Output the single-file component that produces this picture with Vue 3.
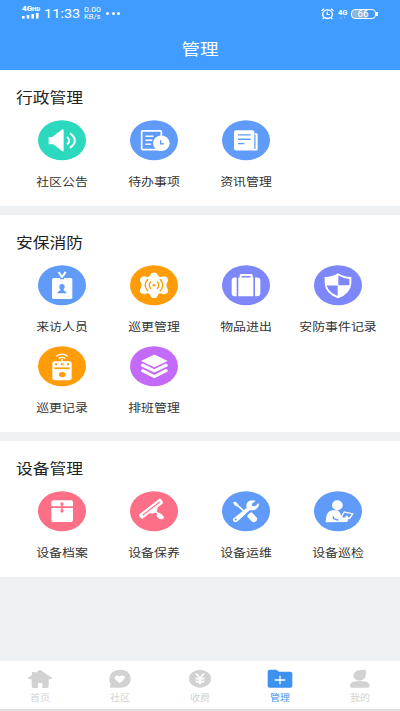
<script setup>
const sections = [
  {
    title: '行政管理',
    items: [
      { label: '社区公告', icon: 'speaker', color: '#2cd8be' },
      { label: '待办事项', icon: 'todo', color: '#619bf9' },
      { label: '资讯管理', icon: 'news', color: '#619bf9' },
    ],
  },
  {
    title: '安保消防',
    items: [
      { label: '来访人员', icon: 'visitor', color: '#619bf9' },
      { label: '巡更管理', icon: 'patrol', color: '#ff9c08' },
      { label: '物品进出', icon: 'luggage', color: '#7d87fa' },
      { label: '安防事件记录', icon: 'shield', color: '#7d87fa' },
      { label: '巡更记录', icon: 'recorder', color: '#ff9c08' },
      { label: '排班管理', icon: 'layers', color: '#c46af8' },
    ],
  },
  {
    title: '设备管理',
    items: [
      { label: '设备档案', icon: 'archive', color: '#fd6f87' },
      { label: '设备保养', icon: 'scraper', color: '#fd6f87' },
      { label: '设备运维', icon: 'tools', color: '#619bf9' },
      { label: '设备巡检', icon: 'inspect', color: '#619bf9' },
    ],
  },
]
const tabs = [
  { label: '首页', icon: 'home' },
  { label: '社区', icon: 'community' },
  { label: '收费', icon: 'fee' },
  { label: '管理', icon: 'manage', active: true },
  { label: '我的', icon: 'mine' },
]
</script>

<template>
  <div class="app">
    <header class="header">
      <div class="status">
        <div class="signal">
          <div class="net">4G<small>HD</small></div>
          <svg width="18" height="6" viewBox="0 0 18 6" fill="#fff">
            <rect x="0" y="3" width="2.6" height="2.6" /><rect x="4.7" y="2" width="2.6" height="3.6" />
            <rect x="9.4" y="1" width="2.6" height="4.6" /><rect x="14" y="0" width="2.6" height="5.6" />
          </svg>
        </div>
        <span class="clock">11:33</span>
        <div class="speed"><span>0.00</span><span>KB/s</span></div>
        <span class="dots"><i></i><i></i><i></i></span>
        <span class="spacer"></span>
        <svg class="alarm" width="13" height="12" viewBox="0 0 13 12" fill="none" stroke="#fff">
          <ellipse cx="6.5" cy="6.2" rx="4.9" ry="4.3" stroke-width="1.4" />
          <path d="M6.2 3.6V6.5H8.8" stroke-width="1.1" />
          <path d="M.6 2.7L3 .8M12.4 2.7L10 .8M2.8 9.8L1.7 11M10.2 9.8L11.3 11" stroke-width="1.3" />
        </svg>
        <div class="mobile">
          <b>4G</b>
          <svg width="9" height="3" viewBox="0 0 9 3" fill="#fff" opacity=".4"><path d="M2 2.5L3 .5L4 2.5ZM5.5 .5H7.5L6.5 2.5Z" /></svg>
        </div>
        <div class="battery"><span>66</span></div>
      </div>
      <h1><span class="flat">管理</span></h1>
    </header>

    <main>
      <section v-for="s in sections" :key="s.title" class="card">
        <h2><span class="flat">{{ s.title }}</span></h2>
        <div class="grid">
          <div v-for="it in s.items" :key="it.label" class="item">
            <svg class="icon" viewBox="0 0 144 120" :style="{ color: it.color }">
              <ellipse cx="72" cy="60" rx="72" ry="60" fill="currentColor" />
              <g v-if="it.icon === 'speaker'" fill="#fff">
                <path d="M32 50H43L72 28Q77 25 77 31V90Q77 96 72 92L46 72H32Z" />
                <path d="M87 50Q101 61 87 73M96 39Q125 61 96 83" fill="none" stroke="#fff" stroke-width="6" />
              </g>
              <g v-else-if="it.icon === 'todo'" fill="none" stroke="#fff" stroke-width="5">
                <rect x="35" y="32" width="59" height="56" rx="3" />
                <path d="M46 48H70M46 60H67M46 72H63" stroke-width="4" />
                <ellipse cx="94" cy="69" rx="25" ry="23" fill="#fff" stroke="none" />
                <path d="M92 60V71H102" stroke="currentColor" stroke-width="4" />
              </g>
              <g v-else-if="it.icon === 'news'" fill="#fff">
                <rect x="36" y="30" width="61" height="61" rx="6" />
                <path d="M94 39H103Q107 39 107 43V87Q107 91 103 91H92V86H98V39Z" />
                <path d="M99 44V86" stroke="currentColor" stroke-width="3" />
                <path d="M48 44H86M48 57H86M48 70H67" stroke="currentColor" stroke-width="4" />
              </g>
              <g v-else-if="it.icon === 'visitor'" fill="#fff">
                <rect x="42" y="38" width="61" height="63" rx="5" />
                <path d="M62 20L72 36L83 20" fill="none" stroke="#fff" stroke-width="6" />
                <path d="M66 38H78V42H66Z" fill="currentColor" />
                <path d="M72 56C78 56 81 60 80 66C79 70 77 72 76 74C78 77 85 77 86 84H58C59 77 66 77 68 74C66 72 64 70 64 66C63 60 66 56 72 56Z" fill="currentColor" />
              </g>
              <g v-else-if="it.icon === 'patrol'" fill="none" stroke="currentColor" stroke-width="4">
                <path d="M63 25Q72 18 81 25Q84 35 92 36Q101 31 109 35Q117 41 113 49Q106 60 113 71Q117 79 109 85Q101 89 92 84Q84 85 81 95Q72 102 63 95Q60 85 52 84Q43 89 35 85Q27 79 31 71Q38 60 31 49Q27 41 35 35Q43 31 52 36Q60 35 63 25Z" fill="#fff" stroke="none" />
                <circle cx="72" cy="60" r="4" fill="currentColor" stroke="none" />
                <path d="M63 49Q52 60 63 71M81 49Q92 60 81 71M54 42Q37 60 54 78M90 42Q107 60 90 78" />
              </g>
              <g v-else-if="it.icon === 'luggage'" fill="#fff">
                <path d="M44 37V93H38Q29 93 29 84V47Q29 37 38 37ZM99 37V93H105Q115 93 115 84V47Q115 37 105 37Z" />
                <path d="M49 37H53V30Q53 26 58 26H87Q92 26 92 30V37H94V93H49ZM59 32V37H86V32Z" fill-rule="evenodd" />
              </g>
              <g v-else-if="it.icon === 'shield'">
                <path d="M72 24Q88 35 112 35V55Q110 86 72 99Q34 86 32 55V35Q56 35 72 24Z" fill="#fff" />
                <path d="M73 31Q88 40 106 41V60H73ZM71 61V92Q44 82 38 61Z" fill="currentColor" />
              </g>
              <g v-else-if="it.icon === 'recorder'" fill="#fff">
                <rect x="43" y="45" width="58" height="57" rx="7" />
                <path d="M55 30Q72 17 89 30M62 37Q72 29 82 37" fill="none" stroke="#fff" stroke-width="4" />
                <circle cx="72" cy="41" r="3" />
                <path d="M51 54H57M69 54H76M87 54H93" stroke="currentColor" stroke-width="6" />
                <path d="M49 66H95" stroke="currentColor" stroke-width="5" />
                <ellipse cx="73" cy="85" rx="10" ry="8" fill="currentColor" />
              </g>
              <g v-else-if="it.icon === 'layers'" fill="#fff">
                <path d="M73 25L113 44L73 63L33 44Z" />
                <path d="M33 55L39 52L73 69L107 52L113 55V60L73 79L33 60Z" />
                <path d="M33 71L39 68L73 86L107 68L113 71V76L73 96L33 76Z" />
              </g>
              <g v-else-if="it.icon === 'archive'" fill="#fff">
                <path d="M40 45V32Q40 27 46 27H99Q105 27 105 32V45ZM40 50H105V86Q105 92 99 92H46Q40 92 40 86Z" />
                <path d="M72 38V59" stroke="currentColor" stroke-width="4" />
                <circle cx="72" cy="38" r="5" fill="currentColor" /><circle cx="72" cy="59" r="5" fill="currentColor" />
              </g>
              <g v-else-if="it.icon === 'scraper'" fill="#fff">
                <path d="M28 69L87 23Q91 21 95 26L98 31Q100 35 97 38L83 48L81 60L71 67L58 66L39 82Q36 85 33 81L28 75Q26 72 28 69Z" />
                <path d="M38 72L89 32" stroke="currentColor" stroke-width="3.5" />
                <path d="M76 61L88 69" stroke="#fff" stroke-width="5" />
                <path d="M80 68Q86 63 94 68L102 77Q103 83 96 84L88 83L80 75Z" />
              </g>
              <g v-else-if="it.icon === 'tools'" fill="#fff">
                <path d="M38 38L51 46L66 60" fill="none" stroke="#fff" stroke-width="5" />
                <path d="M33 34L40 31L50 41L46 46L38 42Z" />
                <path d="M79 69L88 62L105 80Q108 86 101 91Q94 95 89 90L75 76Z" />
                <path d="M34 82L74 50Q70 35 82 29Q91 25 101 29L89 38L91 44L99 45L110 35Q113 48 102 54Q93 59 84 56L46 91Q39 95 35 90Q31 86 34 82Z" />
                <circle cx="41" cy="85" r="3" fill="currentColor" />
              </g>
              <g v-else fill="#fff">
                <ellipse cx="70" cy="42" rx="16" ry="15" />
                <path d="M35 93Q36 59 54 57H69Q76 58 80 70L87 79H101Q106 85 99 92Z" />
                <path d="M58 75V82L73 87" fill="none" stroke="currentColor" stroke-width="4" />
                <path d="M82 76L91 62L116 68L107 81H100" fill="none" stroke="#fff" stroke-width="4" />
                <path d="M92 79L99 72L105 81Z" />
              </g>
            </svg>
            <span class="flat label">{{ it.label }}</span>
          </div>
        </div>
      </section>
    </main>

    <nav class="tabs">
      <div v-for="t in tabs" :key="t.label" class="tab" :class="{ active: t.active }">
        <svg width="26" height="20" viewBox="0 0 78 60" fill="currentColor">
          <path v-if="t.icon === 'home'" d="M39 2L76 27L71 31H65V52Q65 57 60 57H46V42H33V57H19Q14 57 14 52V31H7L2 27L15 18V9H24V12Z" />
          <g v-else-if="t.icon === 'community'">
            <path d="M39 2C59 2 71 13 71 29C71 46 58 56 40 56H11Q7 56 9 51L11 46C2 28 9 2 39 2Z" />
            <path d="M38 43L24 30C19 21 32 15 38 23C44 15 58 21 52 30Z" fill="#fff" />
          </g>
          <g v-else-if="t.icon === 'fee'">
            <ellipse cx="39" cy="29" rx="33" ry="27" />
            <path d="M27 14L39 27L51 14M39 27V46M26 29H52M26 38H52" fill="none" stroke="#fff" stroke-width="5" />
          </g>
          <g v-else-if="t.icon === 'manage'">
            <path d="M2 7Q2 2 8 2H28L36 8H70Q76 8 76 14V51Q76 56 70 56H8Q2 56 2 51Z" />
            <path d="M39 20V46M23 33H55" stroke="#fff" stroke-width="4" />
          </g>
          <g v-else>
            <path d="M56 2Q60 30 44 34C28 37 15 27 20 15C25 4 36 2 56 2Z" />
            <path d="M18 38Q39 34 60 38Q68 42 68 51Q68 56 63 56H14Q9 56 9 51Q9 42 18 38Z" />
          </g>
        </svg>
        <span class="flat">{{ t.label }}</span>
      </div>
    </nav>
    <div class="edge"></div>
  </div>
</template>

<style>
body { background: #eef1f4; overflow: hidden; }
</style>

<style scoped>
.app {
  display: flex;
  flex-direction: column;
  width: 400px;
  height: 711px;
  background: #eef1f4;
  font-family: "Noto Sans CJK SC", sans-serif;
  color: #333;
}
.flat { display: inline-block; transform: scaleY(.86); white-space: nowrap; }
.header { height: 70px; background: #409cff; color: #fff; }
.status { display: flex; align-items: center; height: 27px; padding: 0 22px; font-family: Roboto, sans-serif; }
.signal { display: flex; flex-direction: column; width: 18px; height: 14px; margin-top: -1px; }
.net { display: flex; height: 7px; font-size: 8px; line-height: 6px; font-weight: 900; }
.net small { font-size: 6px; line-height: 5px; }
.clock { width: 36px; margin-left: 4px; font-size: 13.5px; line-height: 27px; transform: scaleX(1.08); transform-origin: left; }
.speed { display: flex; flex-direction: column; width: 17px; margin-left: 4px; font-size: 7px; line-height: 6.5px; }
.speed span { transform: scaleX(1.08); transform-origin: left; }
.speed span:first-child { font-size: 8px; }
.dots { display: flex; gap: 2.5px; margin-left: 5px; }
.dots i { width: 3px; height: 2.5px; border-radius: 1.5px; background: #fff; }
.spacer { flex: 1; }
.mobile { display: flex; flex-direction: column; width: 9px; margin: 0 4px 0 4px; font-size: 7.5px; line-height: 7px; }
.battery {
  position: relative;
  box-sizing: border-box;
  width: 25px;
  height: 10px;
  margin-right: 2px;
  border: 1px solid #fff;
  border-radius: 4px;
  background: linear-gradient(90deg, #8fb5dd 66%, transparent 66%);
  font-size: 9px;
  line-height: 8px;
  text-align: center;
}
.battery span { display: inline-block; transform: scaleX(1.1); }
.battery::after { content: ""; position: absolute; right: -3px; top: 2px; width: 2px; height: 4px; background: #fff; }
h1 { margin: 0; height: 43px; font-size: 18.5px; font-weight: 400; line-height: 42px; text-align: center; }
main { display: flex; flex-direction: column; gap: 9px; flex: 1; }
.card { padding: 0 16px; height: 136px; background: #fff; }
.card:nth-child(2) { height: 217px; }
h2 { margin: 0; height: 50px; font-size: 16.8px; font-weight: 400; line-height: 55px; color: #222; }
.grid { display: grid; grid-template-columns: repeat(4, 92px); grid-auto-rows: 81px; }
.item { display: flex; flex-direction: column; align-items: center; }
.icon { width: 48px; height: 40.5px; flex: none; }
.label { margin-top: 11px; font-size: 12.9px; line-height: 20px; }
.tabs { display: flex; box-sizing: border-box; height: 48px; padding-top: 8px; background: #fff; }
.tab { display: flex; flex-direction: column; align-items: center; flex: 1; color: #d2d2d2; font-size: 10px; line-height: 17px; }
.active { color: #3c92ee; }
.edge { height: 2px; background: #dfe0e1; }
</style>
